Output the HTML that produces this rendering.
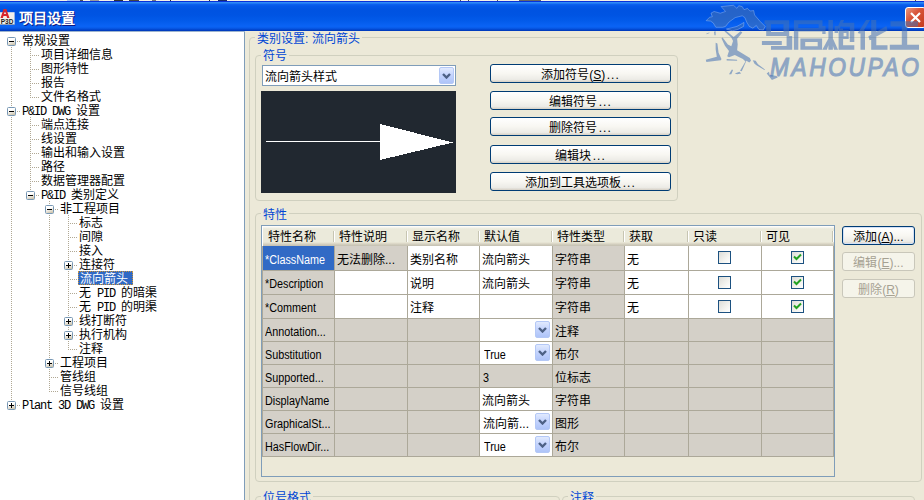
<!DOCTYPE html>
<html lang="zh-CN">
<head>
<meta charset="utf-8">
<title>项目设置</title>
<style>
*{box-sizing:border-box;margin:0;padding:0}
html,body{width:924px;height:500px;overflow:hidden}
body{position:relative;background:#ECE9D8;font-family:"Liberation Sans",sans-serif;font-size:12px;color:#000;line-height:14px}
.abs{position:absolute;white-space:nowrap;overflow:hidden}
#title{position:absolute;left:0;top:1px;width:924px;height:30px;
 background:linear-gradient(to bottom,#0831D9 0px,#0831D9 1px,#2E8BF7 1px,#2E8BF7 2px,#0F64F0 3px,#0458E8 5px,#0053E1 9px,#0054E3 14px,#035BEA 20px,#0A63F4 25px,#0A62F2 26px,#0551DC 28px,#0040C6 29px,#0038B8 30px)}
#title .t{position:absolute;left:19px;top:8px;height:18px;line-height:18px;font-size:14px;font-weight:bold;color:#fff;text-shadow:1px 1px 0 #0A1883;white-space:nowrap}
#tree{position:absolute;left:0;top:31px;width:244px;height:469px;background:#fff}
#treeb{position:absolute;left:244px;top:31px;width:1px;height:469px;background:#7F9DB9}
#treet{position:absolute;left:0;top:31px;width:245px;height:1px;background:#9DB4CE}
.ti{position:absolute;height:14px;line-height:14px;font-size:12px;white-space:nowrap;overflow:hidden}
.ti .m{font-family:"Liberation Mono",monospace;font-size:12px;letter-spacing:-1.2px;white-space:pre}
.ti.sel{background:#316AC5;color:#fff;outline:1px dotted #CE953A;outline-offset:-1px}
.pm{position:absolute;width:9px;height:9px;border:1px solid #7898B5;border-radius:1.5px;background:linear-gradient(160deg,#fff 0%,#fff 35%,#D4CCB8 85%,#C4B8A0 100%)}
.pm:before{content:"";position:absolute;left:1px;top:3px;width:5px;height:1px;background:#000}
.pm.p:after{content:"";position:absolute;left:3px;top:1px;width:1px;height:5px;background:#000}
.vl{position:absolute;width:1px;background-image:linear-gradient(to bottom,#B0A894 50%,transparent 50%);background-size:1px 2px}
.hl{position:absolute;height:1px;background-image:linear-gradient(to right,#B0A894 50%,transparent 50%);background-size:2px 1px}
.gb{position:absolute;border:1px solid #D0D0BF;border-radius:4px}
.gl{position:absolute;height:14px;line-height:14px;font-size:12px;color:#0046D5;background:#ECE9D8;white-space:nowrap;overflow:hidden}
.btn{position:absolute;height:19px;border:1px solid #003C74;border-radius:3px;background:linear-gradient(to bottom,#fff 0%,#F8F7F2 50%,#ECEBE6 85%,#D6D0C5 100%);text-align:center;font-size:12px;line-height:20px;white-space:nowrap;overflow:hidden}
.btn i{font-style:normal;margin-left:1.5px;letter-spacing:1px}
.btn.d{border-color:#C9C7BA;background:#F5F4EA;color:#A5A192}
.btn.f{box-shadow:inset 0 0 0 1px #D3E0F6}
#combo{position:absolute;left:262px;top:65px;width:194px;height:21px;border:1px solid #7F9DB9;background:#fff}
#combo .tx{position:absolute;left:2px;top:4px;height:15px;line-height:15px;font-size:12px;white-space:nowrap}
.dd{position:absolute;width:15px;height:17px;border:1px solid #B4C8F6;border-radius:2px;background:linear-gradient(to bottom,#E1EAFE 0%,#C3D3FD 50%,#AEC4F8 100%)}
.dd svg{position:absolute;left:2px;top:5px}
#prev{position:absolute;left:261px;top:91px;width:195px;height:102px;background:#212830}
#grid{position:absolute;left:261px;top:225px;width:574px;height:252px;border:1px solid #7F9DB9;background:#ECE9D8;overflow:hidden}
.hd{position:absolute;top:0;height:20px;background:linear-gradient(to bottom,#FFFFFF 0px,#FAF9F4 1px,#F0EFE4 2px,#EBEADB 3px,#EBEADB 16px,#E2DECD 17px,#D6D2C2 18px,#CBC7B8 19px,#C5C1B2 20px);font-size:12px;line-height:23px;padding-left:4px;white-space:nowrap;overflow:hidden}
.hs{position:absolute;top:5px;width:2px;height:11px;border-left:1px solid #C7C5B2;border-right:1px solid #fff}
.c{position:absolute;background:#D4D0C8;border-right:1px solid #ACA899;border-bottom:1px solid #ACA899;font-size:12px;white-space:nowrap;overflow:hidden;padding-left:2px}
.c.w{background:#fff}
.c.s{background:#316AC5;color:#fff}
.c .l{display:inline-block;font-size:12px;color:#000;margin-left:1px;transform:scaleX(0.9);transform-origin:0 50%}
.c.s .l{color:#fff}
.cb{position:absolute;width:13px;height:13px;border:1px solid #1C5180;background:linear-gradient(135deg,#DCDCD7 0%,#F3F3EF 60%,#fff 100%)}
.cb svg{position:absolute;left:1px;top:1px}
</style>
</head>
<body>
<div class="abs" style="left:0;top:0;width:924px;height:1px;background:#F3F1E6"></div>
<div class="abs" style="left:67px;top:0;width:15px;height:1px;background:#A9C4F5"></div>
<div class="abs" style="left:80px;top:0;width:3px;height:1px;background:#555"></div>
<div class="abs" style="left:90px;top:0;width:9px;height:1px;background:#9a9a9a"></div>
<div class="abs" style="left:114px;top:0;width:9px;height:1px;background:#333"></div>
<div class="abs" style="left:129px;top:0;width:10px;height:1px;background:#444"></div>
<div class="abs" style="left:152px;top:0;width:4px;height:1px;background:#777"></div>
<div class="abs" style="left:170px;top:0;width:1px;height:1px;background:#333"></div>
<div class="abs" style="left:209px;top:0;width:1px;height:1px;background:#333"></div>
<div class="abs" style="left:218px;top:0;width:9px;height:1px;background:#1a2a6a"></div>
<div class="abs" style="left:460px;top:0;width:1px;height:1px;background:#555"></div>
<div class="abs" style="left:468px;top:0;width:1px;height:1px;background:#555"></div>
<div class="abs" style="left:497px;top:0;width:1px;height:1px;background:#555"></div>
<div class="abs" style="left:519px;top:0;width:22px;height:1px;background:#666"></div>
<div class="abs" style="left:915px;top:0;width:1px;height:1px;background:#554"></div>
<div id="title">
<svg class="abs" style="left:0;top:8px" width="15" height="16" viewBox="0 0 15 16"><rect x="0" y="3.2" width="14.6" height="12.3" fill="#F2F0EA"/><rect x="0" y="15" width="14.6" height="0.6" fill="#999"/><path d="M0.5 8.9 L3.6 0 L6.4 0 L9.5 8.9 L7.1 8.9 L6.5 6.9 L3.5 6.9 L2.9 8.9 Z M4 5 L6 5 L5 1.9 Z" fill="#D9262C"/><text x="0.8" y="14.9" font-family="Liberation Sans, sans-serif" font-size="6.6" font-weight="bold" fill="#222" textLength="12.6" lengthAdjust="spacingAndGlyphs">P3D</text></svg>
<span class="t">项目设置</span>
</div>
<div id="tree"></div><div id="treeb"></div><div id="treet"></div>
<div class="vl" style="left:11px;top:47px;height:354px"></div>
<div class="vl" style="left:30px;top:47px;height:51px"></div>
<div class="vl" style="left:30px;top:117px;height:74px"></div>
<div class="vl" style="left:49px;top:201px;height:191px"></div>
<div class="vl" style="left:68px;top:215px;height:135px"></div>
<div class="hl" style="left:17px;top:41px;width:4px"></div>
<div class="pm" style="left:7px;top:37px"></div>
<div class="ti" style="left:22px;top:34px">常规设置</div>
<div class="hl" style="left:30px;top:55px;width:10px"></div>
<div class="ti" style="left:41px;top:48px">项目详细信息</div>
<div class="hl" style="left:30px;top:69px;width:10px"></div>
<div class="ti" style="left:41px;top:62px">图形特性</div>
<div class="hl" style="left:30px;top:83px;width:10px"></div>
<div class="ti" style="left:41px;top:76px">报告</div>
<div class="hl" style="left:30px;top:97px;width:10px"></div>
<div class="ti" style="left:41px;top:90px">文件名格式</div>
<div class="hl" style="left:17px;top:111px;width:4px"></div>
<div class="pm" style="left:7px;top:107px"></div>
<div class="ti" style="left:22px;top:104px"><span class="m">P&amp;ID DWG </span>设置</div>
<div class="hl" style="left:30px;top:125px;width:10px"></div>
<div class="ti" style="left:41px;top:118px">端点连接</div>
<div class="hl" style="left:30px;top:139px;width:10px"></div>
<div class="ti" style="left:41px;top:132px">线设置</div>
<div class="hl" style="left:30px;top:153px;width:10px"></div>
<div class="ti" style="left:41px;top:146px">输出和输入设置</div>
<div class="hl" style="left:30px;top:167px;width:10px"></div>
<div class="ti" style="left:41px;top:160px">路径</div>
<div class="hl" style="left:30px;top:181px;width:10px"></div>
<div class="ti" style="left:41px;top:174px">数据管理器配置</div>
<div class="hl" style="left:36px;top:195px;width:4px"></div>
<div class="pm" style="left:26px;top:191px"></div>
<div class="ti" style="left:41px;top:188px"><span class="m">P&amp;ID </span>类别定义</div>
<div class="hl" style="left:55px;top:209px;width:4px"></div>
<div class="pm" style="left:45px;top:205px"></div>
<div class="ti" style="left:60px;top:202px">非工程项目</div>
<div class="hl" style="left:68px;top:223px;width:10px"></div>
<div class="ti" style="left:79px;top:216px">标志</div>
<div class="hl" style="left:68px;top:237px;width:10px"></div>
<div class="ti" style="left:79px;top:230px">间隙</div>
<div class="hl" style="left:68px;top:251px;width:10px"></div>
<div class="ti" style="left:79px;top:244px">接入</div>
<div class="hl" style="left:74px;top:265px;width:4px"></div>
<div class="pm p" style="left:64px;top:261px"></div>
<div class="ti" style="left:79px;top:258px">连接符</div>
<div class="hl" style="left:68px;top:279px;width:10px"></div>
<div class="ti sel" style="left:78px;top:271px;width:55px;padding-left:2px;line-height:16px">流向箭头</div>
<div class="hl" style="left:68px;top:293px;width:10px"></div>
<div class="ti" style="left:79px;top:286px">无<span class="m"> PID </span>的暗渠</div>
<div class="hl" style="left:68px;top:307px;width:10px"></div>
<div class="ti" style="left:79px;top:300px">无<span class="m"> PID </span>的明渠</div>
<div class="hl" style="left:74px;top:321px;width:4px"></div>
<div class="pm p" style="left:64px;top:317px"></div>
<div class="ti" style="left:79px;top:314px">线打断符</div>
<div class="hl" style="left:74px;top:335px;width:4px"></div>
<div class="pm p" style="left:64px;top:331px"></div>
<div class="ti" style="left:79px;top:328px">执行机构</div>
<div class="hl" style="left:68px;top:349px;width:10px"></div>
<div class="ti" style="left:79px;top:342px">注释</div>
<div class="hl" style="left:55px;top:363px;width:4px"></div>
<div class="pm p" style="left:45px;top:359px"></div>
<div class="ti" style="left:60px;top:356px">工程项目</div>
<div class="hl" style="left:49px;top:377px;width:10px"></div>
<div class="ti" style="left:60px;top:370px">管线组</div>
<div class="hl" style="left:49px;top:391px;width:10px"></div>
<div class="ti" style="left:60px;top:384px">信号线组</div>
<div class="hl" style="left:17px;top:405px;width:4px"></div>
<div class="pm p" style="left:7px;top:401px"></div>
<div class="ti" style="left:22px;top:398px"><span class="m">Plant 3D DWG </span>设置</div>
<div class="gb" style="left:249px;top:37px;width:690px;height:520px"></div>
<div class="gl" style="left:255px;top:32px;padding:0 2px">类别设置: 流向箭头</div>
<div class="gb" style="left:255px;top:55px;width:423px;height:146px"></div>
<div class="gl" style="left:261px;top:49px;padding:0 2px">符号</div>
<div class="gb" style="left:255px;top:213px;width:667px;height:269px"></div>
<div class="gl" style="left:261px;top:208px;padding:0 2px">特性</div>
<div class="gb" style="left:255px;top:496px;width:305px;height:60px"></div>
<div class="gl" style="left:261px;top:491px;padding:0 2px">位号格式</div>
<div class="gb" style="left:562px;top:496px;width:353px;height:60px"></div>
<div class="gl" style="left:568px;top:491px;padding:0 2px">注释</div>
<div id="combo"><span class="tx">流向箭头样式</span><div class="dd" style="right:1px;top:1px"><svg width="9" height="6" viewBox="0 0 9 6"><path d="M1 1 L4.5 4.5 L8 1" fill="none" stroke="#4D6185" stroke-width="2.4"/></svg></div></div>
<div id="prev"><svg width="195" height="102" viewBox="0 0 195 102" shape-rendering="crispEdges"><rect x="5" y="50" width="115" height="1" fill="#fff"/><path d="M119 33 L119 69 L192 51.5 Z" fill="#fff"/></svg></div>
<div class="btn" style="left:490px;top:64px;width:181px">添加符号(<u>S</u>)<i>...</i></div>
<div class="btn" style="left:490px;top:91px;width:181px">编辑符号<i>...</i></div>
<div class="btn" style="left:490px;top:117px;width:181px">删除符号<i>...</i></div>
<div class="btn" style="left:490px;top:145px;width:181px">编辑块<i>...</i></div>
<div class="btn" style="left:490px;top:172px;width:181px">添加到工具选项板<i>...</i></div>
<div class="btn f" style="left:842px;top:226px;width:73px">添加(<u>A</u>)...</div>
<div class="btn d" style="left:842px;top:252px;width:73px">编辑(<u>E</u>)...</div>
<div class="btn d" style="left:842px;top:279px;width:73px">删除(<u>R</u>)</div>
<div id="grid">
<div class="hd" style="left:0;width:572px"></div>
<div class="hd" style="left:0px;width:71px;padding-left:6px">特性名称</div>
<div class="hs" style="left:71px"></div>
<div class="hd" style="left:73px;width:71px">特性说明</div>
<div class="hs" style="left:144px"></div>
<div class="hd" style="left:146px;width:70px">显示名称</div>
<div class="hs" style="left:216px"></div>
<div class="hd" style="left:218px;width:71px">默认值</div>
<div class="hs" style="left:289px"></div>
<div class="hd" style="left:291px;width:70px">特性类型</div>
<div class="hs" style="left:361px"></div>
<div class="hd" style="left:363px;width:62px">获取</div>
<div class="hs" style="left:425px"></div>
<div class="hd" style="left:427px;width:71px">只读</div>
<div class="hs" style="left:498px"></div>
<div class="hd" style="left:500px;width:70px">可见</div>
<div class="hs" style="left:570px"></div>
<div class="c s" style="left:1px;top:20px;width:72px;height:25px;line-height:29px;padding-left:1px"><span class="l">*ClassName</span></div>
<div class="c " style="left:73px;top:20px;width:73px;height:25px;line-height:29px">无法删除...</div>
<div class="c w" style="left:146px;top:20px;width:72px;height:25px;line-height:29px">类别名称</div>
<div class="c w" style="left:218px;top:20px;width:73px;height:25px;line-height:29px">流向箭头</div>
<div class="c " style="left:291px;top:20px;width:72px;height:25px;line-height:29px">字符串</div>
<div class="c w" style="left:363px;top:20px;width:64px;height:25px;line-height:29px">无</div>
<div class="c w" style="left:427px;top:20px;width:73px;height:25px;line-height:29px"><div class="cb" style="left:29px;top:5px"></div></div>
<div class="c w" style="left:500px;top:20px;width:72px;height:25px;line-height:29px"><div class="cb" style="left:29px;top:5px"><svg width="9" height="9" viewBox="0 0 9 9"><path d="M1 3.5 L3.5 6 L8 1.5" fill="none" stroke="#21A121" stroke-width="2"/></svg></div></div>
<div class="c " style="left:1px;top:45px;width:72px;height:24px;line-height:27px;padding-left:1px"><span class="l">*Description</span></div>
<div class="c w" style="left:73px;top:45px;width:73px;height:24px;line-height:27px"></div>
<div class="c w" style="left:146px;top:45px;width:72px;height:24px;line-height:27px">说明</div>
<div class="c w" style="left:218px;top:45px;width:73px;height:24px;line-height:27px">流向箭头</div>
<div class="c " style="left:291px;top:45px;width:72px;height:24px;line-height:27px">字符串</div>
<div class="c w" style="left:363px;top:45px;width:64px;height:24px;line-height:27px">无</div>
<div class="c w" style="left:427px;top:45px;width:73px;height:24px;line-height:27px"><div class="cb" style="left:29px;top:5px"></div></div>
<div class="c w" style="left:500px;top:45px;width:72px;height:24px;line-height:27px"><div class="cb" style="left:29px;top:5px"><svg width="9" height="9" viewBox="0 0 9 9"><path d="M1 3.5 L3.5 6 L8 1.5" fill="none" stroke="#21A121" stroke-width="2"/></svg></div></div>
<div class="c " style="left:1px;top:69px;width:72px;height:24px;line-height:27px;padding-left:1px"><span class="l">*Comment</span></div>
<div class="c w" style="left:73px;top:69px;width:73px;height:24px;line-height:27px"></div>
<div class="c w" style="left:146px;top:69px;width:72px;height:24px;line-height:27px">注释</div>
<div class="c w" style="left:218px;top:69px;width:73px;height:24px;line-height:27px"></div>
<div class="c " style="left:291px;top:69px;width:72px;height:24px;line-height:27px">字符串</div>
<div class="c w" style="left:363px;top:69px;width:64px;height:24px;line-height:27px">无</div>
<div class="c w" style="left:427px;top:69px;width:73px;height:24px;line-height:27px"><div class="cb" style="left:29px;top:5px"></div></div>
<div class="c w" style="left:500px;top:69px;width:72px;height:24px;line-height:27px"><div class="cb" style="left:29px;top:5px"><svg width="9" height="9" viewBox="0 0 9 9"><path d="M1 3.5 L3.5 6 L8 1.5" fill="none" stroke="#21A121" stroke-width="2"/></svg></div></div>
<div class="c " style="left:1px;top:93px;width:72px;height:23px;line-height:26px;padding-left:1px"><span class="l">Annotation...</span></div>
<div class="c " style="left:73px;top:93px;width:73px;height:23px;line-height:26px"></div>
<div class="c " style="left:146px;top:93px;width:72px;height:23px;line-height:26px"></div>
<div class="c w" style="left:218px;top:93px;width:73px;height:23px;line-height:26px"><span style="margin-left:1px"></span><div class="dd" style="right:2px;top:2px"><svg width="9" height="6" viewBox="0 0 9 6"><path d="M1 1 L4.5 4.5 L8 1" fill="none" stroke="#4D6185" stroke-width="2.4"/></svg></div></div>
<div class="c " style="left:291px;top:93px;width:72px;height:23px;line-height:26px">注释</div>
<div class="c " style="left:363px;top:93px;width:64px;height:23px;line-height:26px"></div>
<div class="c " style="left:427px;top:93px;width:73px;height:23px;line-height:26px"></div>
<div class="c " style="left:500px;top:93px;width:72px;height:23px;line-height:26px"></div>
<div class="c " style="left:1px;top:116px;width:72px;height:23px;line-height:26px;padding-left:1px"><span class="l">Substitution</span></div>
<div class="c " style="left:73px;top:116px;width:73px;height:23px;line-height:26px"></div>
<div class="c " style="left:146px;top:116px;width:72px;height:23px;line-height:26px"></div>
<div class="c w" style="left:218px;top:116px;width:73px;height:23px;line-height:26px"><span style="margin-left:1px"><span class="l">True</span></span><div class="dd" style="right:2px;top:2px"><svg width="9" height="6" viewBox="0 0 9 6"><path d="M1 1 L4.5 4.5 L8 1" fill="none" stroke="#4D6185" stroke-width="2.4"/></svg></div></div>
<div class="c " style="left:291px;top:116px;width:72px;height:23px;line-height:26px">布尔</div>
<div class="c " style="left:363px;top:116px;width:64px;height:23px;line-height:26px"></div>
<div class="c " style="left:427px;top:116px;width:73px;height:23px;line-height:26px"></div>
<div class="c " style="left:500px;top:116px;width:72px;height:23px;line-height:26px"></div>
<div class="c " style="left:1px;top:139px;width:72px;height:23px;line-height:26px;padding-left:1px"><span class="l">Supported...</span></div>
<div class="c " style="left:73px;top:139px;width:73px;height:23px;line-height:26px"></div>
<div class="c " style="left:146px;top:139px;width:72px;height:23px;line-height:26px"></div>
<div class="c " style="left:218px;top:139px;width:73px;height:23px;line-height:26px"><span class="l">3</span></div>
<div class="c " style="left:291px;top:139px;width:72px;height:23px;line-height:26px">位标志</div>
<div class="c " style="left:363px;top:139px;width:64px;height:23px;line-height:26px"></div>
<div class="c " style="left:427px;top:139px;width:73px;height:23px;line-height:26px"></div>
<div class="c " style="left:500px;top:139px;width:72px;height:23px;line-height:26px"></div>
<div class="c " style="left:1px;top:162px;width:72px;height:23px;line-height:26px;padding-left:1px"><span class="l">DisplayName</span></div>
<div class="c " style="left:73px;top:162px;width:73px;height:23px;line-height:26px"></div>
<div class="c " style="left:146px;top:162px;width:72px;height:23px;line-height:26px"></div>
<div class="c w" style="left:218px;top:162px;width:73px;height:23px;line-height:26px">流向箭头</div>
<div class="c " style="left:291px;top:162px;width:72px;height:23px;line-height:26px">字符串</div>
<div class="c " style="left:363px;top:162px;width:64px;height:23px;line-height:26px"></div>
<div class="c " style="left:427px;top:162px;width:73px;height:23px;line-height:26px"></div>
<div class="c " style="left:500px;top:162px;width:72px;height:23px;line-height:26px"></div>
<div class="c " style="left:1px;top:185px;width:72px;height:23px;line-height:26px;padding-left:1px"><span class="l">GraphicalSt...</span></div>
<div class="c " style="left:73px;top:185px;width:73px;height:23px;line-height:26px"></div>
<div class="c " style="left:146px;top:185px;width:72px;height:23px;line-height:26px"></div>
<div class="c w" style="left:218px;top:185px;width:73px;height:23px;line-height:26px"><span style="margin-left:1px">流向箭...</span><div class="dd" style="right:2px;top:2px"><svg width="9" height="6" viewBox="0 0 9 6"><path d="M1 1 L4.5 4.5 L8 1" fill="none" stroke="#4D6185" stroke-width="2.4"/></svg></div></div>
<div class="c " style="left:291px;top:185px;width:72px;height:23px;line-height:26px">图形</div>
<div class="c " style="left:363px;top:185px;width:64px;height:23px;line-height:26px"></div>
<div class="c " style="left:427px;top:185px;width:73px;height:23px;line-height:26px"></div>
<div class="c " style="left:500px;top:185px;width:72px;height:23px;line-height:26px"></div>
<div class="c " style="left:1px;top:208px;width:72px;height:23px;line-height:26px;padding-left:1px"><span class="l">HasFlowDir...</span></div>
<div class="c " style="left:73px;top:208px;width:73px;height:23px;line-height:26px"></div>
<div class="c " style="left:146px;top:208px;width:72px;height:23px;line-height:26px"></div>
<div class="c w" style="left:218px;top:208px;width:73px;height:23px;line-height:26px"><span style="margin-left:1px"><span class="l">True</span></span><div class="dd" style="right:2px;top:2px"><svg width="9" height="6" viewBox="0 0 9 6"><path d="M1 1 L4.5 4.5 L8 1" fill="none" stroke="#4D6185" stroke-width="2.4"/></svg></div></div>
<div class="c " style="left:291px;top:208px;width:72px;height:23px;line-height:26px">布尔</div>
<div class="c " style="left:363px;top:208px;width:64px;height:23px;line-height:26px"></div>
<div class="c " style="left:427px;top:208px;width:73px;height:23px;line-height:26px"></div>
<div class="c " style="left:500px;top:208px;width:72px;height:23px;line-height:26px"></div>
<div class="abs" style="left:0;top:20px;width:1px;height:211px;background:#ACA899"></div><div class="abs" style="left:0;top:0;width:1px;height:20px;background:#fff"></div>
</div>
<div class="abs" style="left:905px;top:7px;width:21px;height:21px;border:1px solid #fff;border-radius:3px;background:linear-gradient(135deg,#E9987F 0%,#D8553A 40%,#C4391C 100%)"><svg width="19" height="19" viewBox="0 0 19 19" style="position:absolute;left:0;top:0"><path d="M5 5 L14 14 M14 5 L5 14" stroke="#fff" stroke-width="2.2"/></svg></div>
<svg class="abs" style="left:700px;top:0" width="80" height="44" viewBox="0 0 909 500"><path fill="rgba(68,113,180,0.555)" stroke="rgba(190,215,255,0.45)" stroke-width="9" stroke-linejoin="round" d="M70 235 L110 195 L140 190 L125 150 L160 130 L230 150 L290 130 L240 75 L330 65 L380 60 L420 95 L440 65 L480 75 L500 110 L540 95 L570 125 L610 120 L620 170 L680 240 L740 300 L720 340 L670 335 L640 290 L600 320 L560 300 L530 250 L510 200 L480 180 L400 200 L330 250 L290 300 L260 310 L180 310 L150 260 L120 240 Z M300 330 L420 300 L500 255 L495 300 L430 335 L370 350 Z"/></svg>
<svg class="abs" style="left:700px;top:26px" width="90" height="58" viewBox="0 0 776 500"><path fill="rgba(68,113,180,0.555)" d="M350 45 L365 55 L320 110 L325 160 L320 210 L345 225 L430 275 L440 300 L425 315 L400 300 L360 390 L345 385 L392 305 L370 285 L300 250 L250 270 L235 260 L250 215 L215 170 L185 105 L195 100 L240 160 L270 175 L285 130 L270 100 L210 45 L225 40 L290 95 Z M135 145 L150 150 L160 230 L185 285 L180 295 L55 310 L50 290 L145 265 L135 200 Z M230 285 L320 290 L320 300 L230 298 Z M250 415 L275 375 L285 380 L270 415 Z M300 410 L340 395 L355 410 L320 415 Z M455 295 L480 300 L500 330 L560 375 L555 380 L490 340 L470 325 Z M575 410 L595 395 L600 420 L660 430 L670 445 L620 465 L600 440 Z M55 65 L80 55 L82 60 L58 72 Z M120 50 L135 45 L135 80 L125 80 Z"/></svg>
<svg class="abs" role="img" aria-label="马后炮化工" style="left:0;top:0" width="924" height="60" viewBox="0 0 924 60"><g opacity="0.555" fill="rgb(68,113,180)"><path d="M764.5 20.3 H787.4 V24.2 H764.5 Z M783.5 20.3 H789.2 V35.9 H783.5 Z M766.2 32.0 H788.7 V35.9 H766.2 Z M766.2 24.2 H771.0 V32.0 H766.2 Z M786.6 35.9 H792.2 V49.8 H786.6 Z M761.9 41.1 H781.8 V45.0 H761.9 Z M771.0 45.9 H792.2 V49.8 H771.0 Z M794.4 20.3 H822.5 V24.2 H794.4 Z M793.9 20.3 H798.3 V49.8 H793.9 Z M818.6 20.3 H822.5 V31.6 H818.6 Z M798.3 28.1 H822.5 V31.6 H798.3 Z M800.4 38.5 H822.1 V42.0 H800.4 Z M800.4 46.3 H822.1 V49.8 H800.4 Z M800.4 38.5 H805.2 V49.8 H800.4 Z M817.7 38.5 H822.1 V49.8 H817.7 Z M828.4 19.9 H832.9 V49.8 H828.4 Z M822.3 26.1 H825.6 V34.0 H822.3 Z M834.6 26.1 H838.0 V32.9 H834.6 Z M830.7 38.5 L826.8 49.8 L822.3 49.8 L828.4 38.5 Z M832.9 38.5 L838.0 49.8 L834.1 49.8 L831.3 40.8 Z M844.2 19.9 L839.7 28.4 L836.9 28.4 L840.8 19.9 Z M841.4 22.8 H853.8 V26.7 H841.4 Z M849.8 22.8 H854.3 V41.9 H849.8 Z M840.8 30.1 H848.7 V32.9 H840.8 Z M840.8 36.3 H848.7 V39.1 H840.8 Z M840.8 30.1 H843.6 V39.1 H840.8 Z M846.4 30.1 H848.7 V39.1 H846.4 Z M838.6 28.4 H843.1 V49.8 H838.6 Z M838.6 45.3 H854.3 V49.8 H838.6 Z M866.1 19.9 L870.1 19.9 L861.6 34.0 L857.7 32.9 Z M860.5 30.6 H865.0 V49.8 H860.5 Z M871.2 19.9 H876.3 V49.8 H871.2 Z M886.4 26.1 L887.5 30.6 L869.5 40.2 L868.4 36.3 Z M871.2 45.3 H887.5 V49.8 H871.2 Z M890.5 21.3 H918.0 V26.4 H890.5 Z M901.8 21.3 H907.2 V49.8 H901.8 Z M889.8 44.7 H919.0 V49.8 H889.8 Z"/></g></svg>
<div class="abs" style="left:770px;top:54px;height:26px;line-height:26px;font-size:22.7px;font-style:italic;letter-spacing:2.6px;color:rgb(68,113,180);-webkit-text-stroke:1px rgb(68,113,180);opacity:0.555;transform:scaleY(1.16);transform-origin:50% 50%">MAHOUPAO</div>
</body>
</html>
